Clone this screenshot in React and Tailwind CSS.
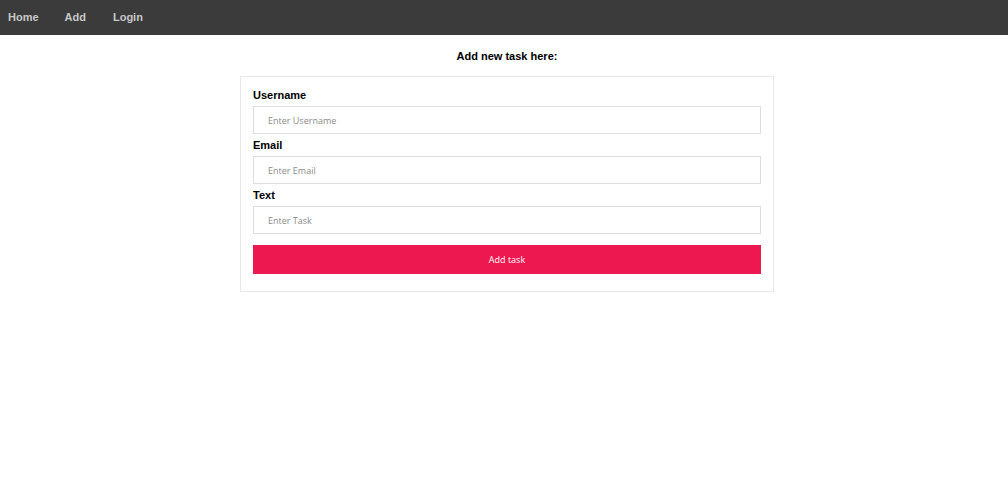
export default function App() {
  return (
    <div className="min-h-[500px] bg-white" style={{ fontFamily: '"Liberation Sans", Arial, sans-serif' }}>
      <nav className="flex h-[35px] items-center bg-[#3b3b3b] pl-[8px] text-[11px] font-bold text-[#c8c8c8]">
        <a className="mr-[26px]">Home</a>
        <a className="mr-[27px]">Add</a>
        <a>Login</a>
      </nav>
      <main className="pl-[6px]">
        <h2 className="mt-[14px] text-center text-[11px] font-bold leading-[14px] text-black">Add new task here:</h2>
        <div className="mx-auto mt-[13px] w-[534px] border border-[#e8e8e8] px-[12px] pt-[7px] pb-[17px]">
          <Field label="Username" placeholder="Enter Username" />
          <Field label="Email" placeholder="Enter Email" />
          <Field label="Text" placeholder="Enter Task" />
          <button className="mt-[11px] h-[29px] w-full bg-[#ed1850] text-[9px] text-white" style={{ fontFamily: '"Open Sans", sans-serif' }}>
            Add task
          </button>
        </div>
      </main>
    </div>
  );
}

function Field({ label, placeholder }) {
  return (
    <div>
      <label className="block text-[11px] font-bold leading-[22px] text-black">{label}</label>
      <input
        className="block h-[28px] w-full border border-[#dedede] px-[14px] text-[9px] placeholder:text-[#8a8a8a] outline-none"
        style={{ fontFamily: '"Open Sans", sans-serif' }}
        placeholder={placeholder}
      />
    </div>
  );
}
